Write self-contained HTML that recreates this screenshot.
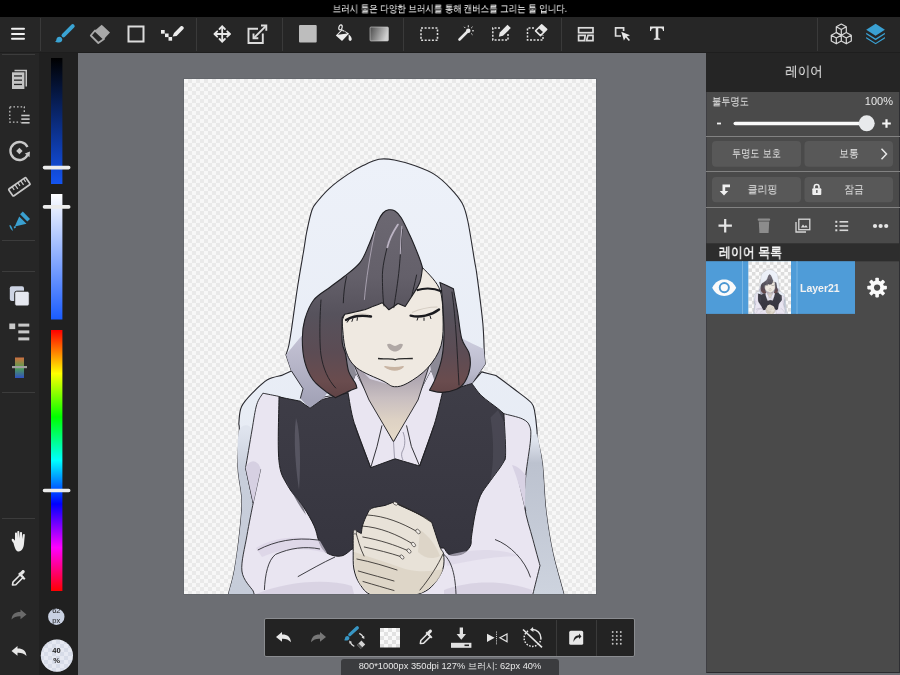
<!DOCTYPE html>
<html><head><meta charset="utf-8">
<style>
*{margin:0;padding:0;box-sizing:border-box}
html,body{width:900px;height:675px;overflow:hidden;background:#6c6e73;font-family:"Liberation Sans",sans-serif}
.abs{position:absolute}
#status{left:0;top:0;width:900px;height:17px;background:#000}
#stxt{left:0;top:0;width:900px;height:17px;color:#fff;font-size:10px;text-align:center;line-height:17px;transform:scaleX(0.85)}
#toolbar{left:0;top:17px;width:900px;height:36px;background:#262626;border-bottom:1px solid #1e1e1e}
#lside{left:0;top:53px;width:39px;height:622px;background:#262626}
#ccol{left:39px;top:53px;width:39px;height:622px;background:#202020}
#canvas{left:184px;top:79px;width:412px;height:515px;box-shadow:0 0 0 1px #64676c;background:repeating-conic-gradient(#e9e9e9 0 25%,#f7f7f7 0 50%) 0 0/8px 8px}
#rpanel{left:706px;top:53px;width:194px;height:620px;background:#4a4a4a;border-left:1px solid #3e3e42;border-right:1px solid #2e2e32;border-bottom:1px solid #2a2a2e}
#rhead{left:706px;top:53px;width:194px;height:39px;background:#252525}
.t{position:absolute;white-space:nowrap;color:#e8e8e8;font-size:11px;line-height:1}
#btoolbar{left:264px;top:618px;width:371px;height:39px;background:#232323;border:1px solid #8a8c90;border-radius:2px}
#bstatus{left:341px;top:659px;width:218px;height:16px;background:#3b3c3f;border-radius:3px 3px 0 0}
svg{overflow:visible;will-change:transform}
.t,#stxt{will-change:transform}
</style></head><body>
<div id="status" class="abs"></div>
<div id="toolbar" class="abs"></div>
<div id="lside" class="abs"></div>
<div id="ccol" class="abs"></div>
<div id="canvas" class="abs"></div>
<div id="rpanel" class="abs"></div>
<div id="rhead" class="abs"></div>
<div id="btoolbar" class="abs"></div>
<div id="bstatus" class="abs"></div>
<svg class="abs" style="left:0;top:0" width="900" height="675" viewBox="0 0 900 675">
<defs>
 <clipPath id="cv"><rect x="184" y="79" width="412" height="515"/></clipPath>
 <linearGradient id="hair" x1="0" y1="210" x2="0" y2="400" gradientUnits="userSpaceOnUse"><stop offset="0" stop-color="#6c6872"/><stop offset="0.35" stop-color="#64606a"/><stop offset="0.55" stop-color="#56525c"/><stop offset="0.75" stop-color="#5c4c54"/><stop offset="0.9" stop-color="#6a4c4e"/><stop offset="1" stop-color="#5e4244"/></linearGradient>
 <linearGradient id="hood" x1="0" y1="160" x2="0" y2="594" gradientUnits="userSpaceOnUse"><stop offset="0" stop-color="#edf1f9"/><stop offset="1" stop-color="#e4e9f2"/></linearGradient>
 <linearGradient id="hoodsideL" x1="0" y1="430" x2="0" y2="594" gradientUnits="userSpaceOnUse"><stop offset="0" stop-color="#dfe4ee"/><stop offset="0.25" stop-color="#c8cedb"/><stop offset="1" stop-color="#c6ccd9"/></linearGradient>
 <linearGradient id="hoodsideR" x1="0" y1="440" x2="0" y2="594" gradientUnits="userSpaceOnUse"><stop offset="0" stop-color="#dfe4ee"/><stop offset="0.15" stop-color="#bcc2cf"/><stop offset="1" stop-color="#cdd3de"/></linearGradient>
 <linearGradient id="hoodside" x1="0" y1="400" x2="0" y2="594" gradientUnits="userSpaceOnUse"><stop offset="0" stop-color="#e2e6ef"/><stop offset="1" stop-color="#c4c9d6"/></linearGradient>
 <linearGradient id="vest" x1="0" y1="390" x2="0" y2="555" gradientUnits="userSpaceOnUse"><stop offset="0" stop-color="#3e3d47"/><stop offset="1" stop-color="#36353f"/></linearGradient>
 <linearGradient id="shadeR" x1="0" y1="335" x2="0" y2="400" gradientUnits="userSpaceOnUse"><stop offset="0" stop-color="#cfcfe0"/><stop offset="0.6" stop-color="#b8b8ca"/><stop offset="1" stop-color="#8c8c9e"/></linearGradient>
 <linearGradient id="shadeL" x1="0" y1="330" x2="0" y2="400" gradientUnits="userSpaceOnUse"><stop offset="0" stop-color="#c8c6d8"/><stop offset="1" stop-color="#a4a4b8"/></linearGradient>
 <linearGradient id="neck" x1="0" y1="375" x2="0" y2="440" gradientUnits="userSpaceOnUse"><stop offset="0" stop-color="#aaa2ae"/><stop offset="0.35" stop-color="#c8bec0"/><stop offset="0.7" stop-color="#ded2c4"/><stop offset="1" stop-color="#e6dac8"/></linearGradient>
</defs>
<g id="fig" clip-path="url(#cv)" stroke-linejoin="round">
<path d="M378.9 159.3 C384.1 158.4 388.5 158.9 394.4 160.0 C400.3 161.1 407.7 163.2 414.4 165.6 C421.1 168.0 428.5 170.7 434.4 174.4 C440.3 178.1 445.4 183.0 450.0 187.8 C454.6 192.6 459.2 197.8 462.2 203.3 C465.2 208.8 465.8 211.6 467.8 221.0 C469.8 230.4 472.9 250.9 474.4 260.0 C475.9 269.1 475.6 265.0 477.0 275.5 C478.4 286.0 481.6 309.8 482.8 323.0 C484.0 336.2 484.0 348.2 484.4 355.0 C484.8 361.8 485.1 362.4 485.2 363.9 C483.0 367.2 474.1 380.2 471.9 383.5 C473.5 381.6 480.1 373.8 481.7 371.9 C484.1 372.5 493.5 374.9 495.9 375.5 C498.9 377.7 507.8 384.2 513.7 388.8 C519.6 393.4 528.0 398.9 531.5 403.0 C535.0 407.1 534.1 409.2 535.0 413.7 C535.9 418.1 536.4 425.3 536.9 429.7 C537.4 434.1 536.8 434.3 537.7 440.0 C538.6 445.7 541.0 451.9 542.4 463.7 C543.8 475.5 544.2 496.0 546.0 511.0 C547.8 526.0 550.0 539.9 553.0 553.7 C556.0 567.5 561.9 586.3 563.7 594.0 C565.5 601.7 564.0 599.0 564.0 600.0 C507.8 600.0 283.2 600.0 227.0 600.0 C227.4 598.5 228.1 595.8 229.3 591.0 C230.5 586.2 232.6 580.2 234.3 571.0 C236.0 561.8 238.0 547.5 239.3 535.8 C240.6 524.0 242.1 511.8 241.9 500.5 C241.7 489.2 238.4 479.6 238.0 467.8 C237.6 456.1 239.2 437.6 239.3 430.0 C239.5 422.4 238.5 426.4 238.9 422.5 C239.3 418.6 239.2 411.5 241.6 406.5 C244.0 401.5 248.8 396.8 253.1 392.3 C257.4 387.9 262.6 382.6 267.4 379.8 C272.1 377.0 279.2 376.1 281.6 375.4 C283.2 374.6 289.8 371.6 291.4 370.9 C290.5 368.2 286.9 357.6 286.0 354.9 C286.4 353.4 287.8 350.1 288.7 346.0 C289.6 341.9 289.9 340.1 291.4 330.0 C292.9 319.9 295.7 298.8 297.8 285.5 C299.9 272.2 302.3 258.9 303.8 250.0 C305.3 241.1 305.3 238.7 306.7 232.0 C308.1 225.3 310.1 215.2 312.0 210.0 C313.9 204.8 314.8 204.7 317.8 201.0 C320.8 197.3 325.0 192.2 330.0 187.8 C335.0 183.4 342.3 178.1 347.8 174.4 C353.3 170.7 357.8 168.1 363.0 165.6 C368.2 163.1 373.7 160.2 378.9 159.3Z" fill="url(#hood)" stroke="#2a2a30" stroke-width="1.1"/>
<path d="M239.3 430.0 C237.0 436.3 237.6 456.1 238.0 467.8 C238.4 479.6 241.7 489.2 241.9 500.5 C242.1 511.8 240.6 524.0 239.3 535.8 C238.0 547.5 236.0 561.8 234.3 571.0 C232.6 580.2 230.5 586.2 229.3 591.0 C228.1 595.8 227.4 598.5 227.0 600.0 C231.8 600.0 251.2 600.0 256.0 600.0 C255.5 598.5 255.5 595.8 253.2 591.0 C250.8 586.2 242.9 580.2 241.9 571.0 C240.9 561.8 245.0 547.1 246.9 535.8 C248.8 524.5 252.1 508.5 253.2 503.0 C251.9 497.1 246.9 473.7 245.6 467.8 C246.7 461.5 253.1 436.3 252.0 430.0 C250.9 423.7 241.6 423.7 239.3 430.0Z" fill="url(#hoodsideL)"/>
<path d="M530.5 436.0 C531.6 435.7 536.1 434.3 537.2 434.0 C538.1 438.9 540.9 450.9 542.4 463.7 C543.9 476.5 544.2 496.0 546.0 511.0 C547.8 526.0 550.0 539.9 553.0 553.7 C556.0 567.5 561.9 586.3 563.7 594.0 C565.5 601.7 564.0 599.0 564.0 600.0 C558.8 600.0 538.2 600.0 533.0 600.0 C533.0 599.0 531.7 599.7 532.9 594.0 C534.1 588.3 538.8 570.3 540.0 565.6 C538.8 561.2 535.5 549.4 532.9 539.5 C530.3 529.6 525.8 517.1 524.6 506.4 C523.4 495.7 524.8 487.2 525.8 475.5 C526.8 463.8 529.7 442.6 530.5 436.0Z" fill="url(#hoodsideR)"/>
<path d="M262.9 393.2 C265.4 393.7 275.5 395.7 278.0 396.2 C283.2 398.0 303.8 405.2 309.0 407.0 C311.5 405.3 321.5 398.7 324.0 397.0 C328.0 396.3 344.0 393.5 348.0 392.8 C349.3 389.5 354.7 376.3 356.0 373.0 C362.2 384.4 387.2 430.2 393.5 441.7 C399.8 429.8 424.8 381.9 431.0 370.0 C432.9 373.8 440.5 389.0 442.4 392.8 C445.7 393.3 458.7 395.5 462.0 396.0 C469.0 398.9 496.9 410.8 503.9 413.7 C507.0 414.6 518.3 416.9 522.6 419.0 C526.9 421.1 528.4 422.7 529.7 426.2 C531.0 429.7 531.1 431.8 530.5 440.0 C529.9 448.2 526.8 464.4 525.8 475.5 C524.8 486.6 523.4 495.7 524.6 506.4 C525.8 517.1 530.3 529.6 532.9 539.5 C535.5 549.4 538.8 561.2 540.0 565.6 C538.8 570.3 534.1 589.3 532.9 594.0 C532.9 595.0 533.0 599.0 533.0 600.0 C486.8 600.0 302.2 600.0 256.0 600.0 C255.5 598.5 253.7 592.5 253.2 591.0 C251.3 587.7 242.9 580.2 241.9 571.0 C240.9 561.8 245.0 547.1 246.9 535.8 C248.8 524.5 252.1 508.5 253.2 503.0 C251.9 497.1 246.9 473.7 245.6 467.8 C246.7 461.5 250.2 440.5 252.0 430.0 C253.8 419.5 254.9 410.8 256.7 404.7 C258.5 398.6 261.9 395.1 262.9 393.2Z" fill="#e9e5f1" stroke="#1e1e22" stroke-width="0.9"/>
<path d="M253.2 503 L260.7 469 M245.6 467.8 L253.2 503" fill="none" stroke="#2a2a30" stroke-width="0.8"/>
<path d="M245.6 467.8 L253.2 503 L260.7 469 C258 460 250 458 245.6 467.8Z" fill="#d6d0e2"/>
<path d="M516.3 470.8 C520 485 523 500 525.8 511" fill="none" stroke="#2a2a30" stroke-width="0.8"/>
<path d="M512 465 C518 480 522 495 525 509 C525 495 525.5 485 525.8 475.5 C522 470 517 466 512 465Z" fill="#d8d2e4"/>
<path d="M302.0 335.3 C299.3 338.6 288.7 351.6 286.0 354.9 C286.9 357.6 290.5 368.2 291.4 370.9 C293.3 373.9 301.1 385.7 303.0 388.7 C302.6 390.3 300.8 396.9 300.3 398.5 C301.9 400.1 308.4 406.7 310.0 408.3 C312.1 406.8 320.4 400.9 322.5 399.4 C323.4 398.3 326.8 393.9 327.6 392.8 C325.2 390.6 315.3 382.0 312.9 379.8 C311.5 376.8 306.1 364.9 304.8 361.9 C304.4 358.1 302.7 342.8 302.3 339.0 C302.2 338.4 302.1 335.9 302.0 335.3Z" fill="url(#shadeL)"/>
<path d="M291.4 370.9 L303 388.7 L300.3 398.5" fill="none" stroke="#1e1e22" stroke-width="0.9"/>
<path d="M461.7 338.5 C465.3 340.2 479.9 347.1 483.5 348.8 C483.6 349.8 484.2 354.0 484.4 355.0 C484.5 356.5 485.1 362.4 485.2 363.9 C483.0 367.2 474.1 380.2 471.9 383.5 C469.3 384.5 459.1 388.3 456.5 389.3 C457.9 388.1 462.6 385.6 464.8 382.0 C467.1 378.4 469.3 372.3 470.0 367.5 C470.7 362.7 470.4 357.8 469.0 353.0 C467.6 348.2 462.9 340.9 461.7 338.5Z" fill="url(#shadeR)"/>
<path d="M338 335 L448 335 L446 398 L431 370 L393.5 441.7 L356 373 L340 398Z" fill="#dcd8e6"/>
<path d="M342 335 L352.8 362 L356 373 L350 392 L342 390Z" fill="#8c8a96"/>
<path d="M444 335 L429.8 363.7 L431 370 L438 392 L446 390Z" fill="#8c8a96"/>
<path d="M352.8 362 L369 400 L393.5 441.7 L418 400 L429.8 363.7 L420 372 L394 386 L370 379Z" fill="url(#neck)"/>
<path d="M352.8 362 L369 400 L393.5 441.7 L418 400 L429.8 363.7" fill="none" stroke="#1e1e22" stroke-width="0.9"/>
<path d="M279.0 397.0 C282.6 397.7 296.8 400.5 300.3 401.2 C301.9 402.4 308.4 407.1 310.0 408.3 C312.1 406.8 320.4 400.9 322.5 399.4 C326.8 398.3 343.8 393.9 348.0 392.8 C349.1 397.9 350.6 411.2 354.4 423.7 C358.2 436.2 368.0 460.4 370.7 467.7 C374.8 466.2 390.9 460.3 395.0 458.8 C399.1 460.0 415.5 464.8 419.6 466.0 C422.0 459.2 430.2 437.6 434.0 425.4 C437.8 413.2 441.0 398.2 442.4 392.8 C444.7 392.1 453.7 389.2 456.0 388.5 C458.6 387.7 469.2 384.3 471.9 383.5 C473.5 385.6 477.4 391.8 481.7 395.9 C486.0 400.0 494.0 405.4 497.7 408.4 C501.4 411.4 502.9 412.8 503.9 413.7 C504.2 420.2 505.8 444.7 505.6 452.9 C505.5 461.1 505.5 458.4 503.0 463.0 C500.5 467.6 494.3 475.2 490.5 480.6 C486.7 486.1 482.9 490.2 480.4 495.7 C477.9 501.2 476.8 506.7 475.3 513.4 C473.8 520.1 472.4 530.6 471.6 536.0 C470.8 541.4 471.8 543.0 470.3 546.0 C468.8 549.0 466.1 552.2 462.7 553.7 C459.3 555.2 453.1 556.0 450.0 555.0 C446.9 554.0 445.0 549.2 444.0 548.0 C428.7 548.2 367.3 548.8 352.0 549.0 C350.5 550.1 346.2 554.4 343.0 555.5 C339.8 556.6 336.2 556.3 333.0 555.5 C329.8 554.7 326.4 553.1 324.0 550.5 C321.6 547.9 320.1 544.1 318.5 540.0 C316.9 535.9 316.8 531.7 314.2 526.0 C311.6 520.3 307.2 512.6 302.8 505.9 C298.4 499.2 291.7 493.3 287.7 485.7 C283.7 478.1 280.3 475.3 278.9 460.5 C277.4 445.7 279.0 407.6 279.0 397.0Z" fill="url(#vest)" stroke="#1e1e22" stroke-width="1"/>
<path d="M490.5 417.6 C494 440 494 462 490.5 480.6 L503 463 L505.6 452.9 L504.3 422.7 L498 410 Z" fill="#4a4954" opacity="0.9"/>
<path d="M296 418 C300 430 301 460 299 490 C296 470 293 440 296 418Z" fill="#5c5a66" opacity="0.85"/>
<path d="M279 460 C285 480 295 500 306 515 L302.8 505.9 L287.7 485.7 L278.9 460.5Z" fill="#4a4954" opacity="0.7"/>
<path d="M393.5 441.7 L394.5 458 M403 432 C406 440 405 447 402 452 C401 455 402 458 403 460" fill="none" stroke="#8a889a" stroke-width="0.8"/>
<path d="M354.4 423.7 L370.7 467.7 L377 446.5 L382 425.4" fill="none" stroke="#1e1e22" stroke-width="0.9"/>
<path d="M434 425.4 L419.6 466 L411.4 446.5 L406.5 425.4" fill="none" stroke="#1e1e22" stroke-width="0.9"/>
<path d="M342.0 321.0 C343.3 317.5 348.7 303.5 350.0 300.0 C355.0 298.3 375.0 291.7 380.0 290.0 C385.0 288.0 405.0 280.0 410.0 278.0 C411.8 276.0 419.2 268.0 421.0 266.0 C424.0 269.6 435.3 279.4 439.0 287.8 C442.7 296.2 442.7 307.1 443.0 316.7 C443.3 326.3 443.5 337.1 441.0 345.6 C438.5 354.1 433.3 361.6 427.8 367.8 C422.3 374.0 413.4 379.9 407.8 383.0 C402.2 386.1 398.5 387.0 394.4 386.7 C390.3 386.4 389.3 384.1 383.0 381.0 C376.7 377.9 362.9 373.0 356.7 367.8 C350.5 362.6 348.1 357.8 345.6 350.0 C343.2 342.2 342.6 325.8 342.0 321.0Z" fill="#efe9e1" stroke="#1e1e22" stroke-width="1"/>
<path d="M388.7 209.8 C390.7 209.5 392.9 209.7 395.0 211.0 C397.1 212.3 398.7 213.7 401.2 217.8 C403.7 221.9 407.0 229.1 410.0 235.6 C413.0 242.1 416.9 251.7 419.0 257.0 C421.1 262.3 421.9 265.8 422.5 267.6 C422.1 270.0 421.5 277.6 420.0 282.0 C418.5 286.4 414.4 292.0 413.3 294.0 C411.9 296.1 406.6 304.4 405.2 306.5 C404.0 306.0 399.2 304.0 398.0 303.5 C396.5 304.6 390.4 308.8 388.9 309.8 C387.8 308.6 383.5 304.0 382.4 302.8 C381.0 303.3 375.4 305.5 374.0 306.0 C372.4 306.6 366.0 309.2 364.4 309.8 C362.8 310.2 356.6 311.6 355.0 312.0 C353.3 312.4 346.6 313.8 344.9 314.2 C344.4 314.8 342.6 317.3 342.2 317.9 C342.2 322.0 341.6 336.3 342.2 342.3 C342.8 348.3 344.4 348.8 345.5 353.7 C346.6 358.6 347.1 366.8 348.7 371.7 C350.3 376.6 353.9 380.3 355.3 383.0 C356.7 385.7 356.6 387.2 356.9 388.0 C355.5 388.5 352.2 389.6 348.7 391.2 C345.2 392.8 337.9 396.6 335.7 397.7 C334.4 396.9 331.4 395.8 327.6 392.8 C323.8 389.8 316.7 385.0 312.9 379.8 C309.1 374.6 306.6 368.7 304.8 361.9 C303.0 355.1 302.3 346.1 302.3 339.0 C302.3 331.9 302.9 326.0 304.8 319.5 C306.7 313.0 309.5 305.4 313.7 300.0 C317.9 294.6 324.9 291.1 330.0 287.2 C335.1 283.3 339.2 280.6 344.2 276.5 C349.2 272.4 356.1 267.6 360.2 262.3 C364.3 257.0 366.0 251.3 369.0 244.5 C372.0 237.7 375.7 226.7 378.0 221.4 C380.3 216.2 381.2 214.9 383.0 213.0 C384.8 211.1 386.7 210.1 388.7 209.8Z" fill="url(#hair)" stroke="#1e1e22" stroke-width="1.1"/>
<path d="M439.9 282.4 C442.1 283.4 451.1 287.6 453.4 288.7 C454.1 292.5 456.1 303.2 457.5 311.5 C458.9 319.8 459.8 331.6 461.7 338.5 C463.6 345.4 467.6 348.2 469.0 353.0 C470.4 357.8 470.7 362.7 470.0 367.5 C469.3 372.3 467.1 378.4 464.8 382.0 C462.6 385.6 460.3 387.6 456.5 389.3 C452.7 391.0 446.5 392.2 442.0 392.4 C437.5 392.6 431.6 390.6 429.5 390.3 C430.5 388.2 433.6 383.4 435.7 377.9 C437.8 372.4 440.6 364.7 442.0 357.1 C443.4 349.5 444.0 342.6 444.0 332.2 C444.0 321.8 442.7 303.2 442.0 294.9 C441.3 286.6 440.2 284.5 439.9 282.4Z" fill="url(#hair)" stroke="#1e1e22" stroke-width="1.1"/>
<g fill="none" stroke="#1e1e22" stroke-width="0.9" stroke-linecap="round"><path d="M388.9 240.9 C385 255 382 268 382.4 278.3 C382.5 290 383 300 384 306"/><path d="M402 229.4 C401 245 400 262 398.7 273.4 C397 288 395 300 393.8 307.7"/><path d="M346.5 276.7 C344.5 285 343.5 295 343.3 302.8"/><path d="M416.6 275 C415 283 413 290 411.7 296.3"/><path d="M321 300 C319.5 320 319.5 345 321 355 C323 368 328 380 335.7 388"/><path d="M452 292 C456 320 457 350 459 385"/></g>
<g fill="none" stroke="#bcb4c4" stroke-linecap="round"><path d="M397.9 224.6 C393 232 389 240 387.3 247.4" stroke-width="1.8"/><path d="M401.9 226.2 C401 235 400.5 245 400.3 253.9" stroke-width="1"/><path d="M375 231 C370 255 366 280 364.4 299.5" stroke-width="0.9" opacity="0.85"/></g>
<path d="M346 320 C352 316.5 362 315 371 316.5" fill="none" stroke="#1a1a1e" stroke-width="2.4" stroke-linecap="round"/>
<path d="M349 319.5 L347 322.5 M353 318.3 L351.8 321.8 M357.5 317.4 L357 320.8" stroke="#1a1a1e" stroke-width="1"/>
<path d="M354 314.6 C359 313.5 365 313.5 369 314.8" fill="none" stroke="#d4ccc2" stroke-width="1"/>
<path d="M410.6 315.6 C420 318 431 315.5 439 309.5" fill="none" stroke="#1a1a1e" stroke-width="2.4" stroke-linecap="round"/>
<path d="M418 317.5 L417 320.5 M424 317.5 L424 320.8 M430 315.8 L431 319" stroke="#1a1a1e" stroke-width="1"/>
<path d="M416.7 290.3 C425 287.5 434 288 442 291.5" fill="none" stroke="#1a1a1e" stroke-width="2"/>
<path d="M412 312.5 C420 309 431 307 437.5 307" fill="none" stroke="#d4ccc2" stroke-width="1.1"/>
<path d="M387 344.5 C390 342.5 392 345.5 395 346 C398 345.5 400 342.5 403 344.5 C402 349 398 351.5 395 351.5 C392 351.5 388 349 387 344.5Z" fill="#a49c9a" opacity="0.85"/>
<path d="M378 358.5 C386 359.5 392 358 395 359.8 C399 358 405 359 412.8 358.5" fill="none" stroke="#2a2a2a" stroke-width="1.3"/>
<path d="M385 366.7 C391 371 399 371 403 366.7 C398 368 391 368 385 366.7Z" fill="#c8b4a2" stroke="#c8b4a2" stroke-width="1.6"/>
<path d="M256 548 C272 538 298 534 320 541 L327 553 C305 547 282 548 262 557Z" fill="#d8d2e4" opacity="0.7"/>
<path d="M256 594 C285 582 325 578 352 586 L354 594Z" fill="#d4cee0" opacity="0.8"/>
<path d="M444 590 C470 580 505 580 532 590 L532 594 L444 594Z" fill="#d4cee0" opacity="0.8"/>
<path d="M445 556 C470 548 500 548 520 556 C500 556 470 560 447 566Z" fill="#d8d2e4" opacity="0.6"/>
<g fill="none" stroke="#2a2a30" stroke-width="0.9"><path d="M257.8 550 C275 541 295 537 318 540"/><path d="M264.4 590 C265 575 268 560 275.6 554.4 C290 548 305 546 320 549"/><path d="M297.8 576.7 C310 570 322 563 335 557"/><path d="M443.6 554 C450 560 455 570 456 594"/><path d="M495 539.5 C510 545 525 560 530.5 577.4"/></g>
<path d="M394.0 502.4 C396.5 502.4 395.2 503.2 399.9 505.4 C404.6 507.6 416.9 513.1 422.1 515.8 C427.3 518.5 429.3 520.2 431.0 521.7 C432.7 523.2 431.0 520.5 432.5 524.7 C434.0 528.9 438.1 542.1 440.0 547.0 C441.9 551.9 443.1 550.6 443.6 554.3 C444.1 558.0 444.5 564.0 442.9 569.0 C441.3 574.0 437.5 580.0 434.0 584.0 C430.5 588.0 427.7 590.6 422.0 592.8 C416.3 595.0 408.4 596.6 400.0 597.0 C391.6 597.4 378.4 597.2 371.7 595.0 C365.0 592.8 362.8 588.3 359.8 584.0 C356.8 579.7 355.0 574.5 353.9 569.0 C352.8 563.5 353.3 557.5 353.2 551.3 C353.1 545.1 353.2 535.2 353.2 532.0 C353.6 531.8 355.0 530.8 355.4 530.6 C356.4 531.1 360.3 533.0 361.3 533.5 C361.6 532.0 361.8 527.9 362.8 524.7 C363.8 521.5 365.7 517.0 367.2 514.3 C368.7 511.6 368.7 509.8 371.7 508.3 C374.7 506.8 381.3 506.4 385.0 505.4 C388.7 504.4 391.5 502.4 394.0 502.4Z" fill="#e8e2d8" stroke="#1e1e22" stroke-width="1"/>
<path d="M354 552 C370 557 388 563 405 569 C420 573 435 571 442.9 569 C441 576 438 580 434 584 L422 592.8 L400 597 L371.7 595 L359.8 584 C356 576 354 565 354 552Z" fill="#dcd4c6" opacity="0.85"/>
<path d="M420 530 C428 535 436 545 440 556 C432 560 424 558 418 552Z" fill="#d8d0c2" opacity="0.7"/>
<g fill="none" stroke="#2e2a28" stroke-width="0.85" stroke-linecap="round"><path d="M367.5 515 C385 516 402 523 416 531"/><path d="M361.5 526 C380 527 398 535 412 543.5"/><path d="M362.8 537 C380 540 395 545 407.5 550.5"/><path d="M364.3 547 C378 550 390 553 400.5 556.5"/><path d="M356.9 559 C372 562 385 566 397 570"/><path d="M358.3 571 C372 575 384 578 394 581"/><path d="M363 581.5 C375 585 385 588 394 590.5"/><path d="M396 503 C408 508 421 515 431 522"/><path d="M355.4 530.6 C358 540 360 548 364 556"/><path d="M443 554 C438 565 430 578 420 590"/></g>
<g fill="#f1ede8" stroke="#2e2a28" stroke-width="0.6"><ellipse cx="418" cy="531.5" rx="2.7" ry="1.7" transform="rotate(45 418 531.5)"/><ellipse cx="413.5" cy="544.5" rx="2.6" ry="1.6" transform="rotate(50 413.5 544.5)"/><ellipse cx="409" cy="551" rx="2.5" ry="1.6" transform="rotate(50 409 551)"/><ellipse cx="402" cy="557" rx="2.4" ry="1.5" transform="rotate(50 402 557)"/><ellipse cx="395.5" cy="503.5" rx="2.3" ry="1.4" transform="rotate(25 395.5 503.5)"/><ellipse cx="355" cy="532" rx="1.4" ry="2.2"/></g>
</g>
</svg>
<svg class="abs" style="left:0;top:0" width="900" height="675" viewBox="0 0 900 675">
<defs>
 <linearGradient id="g1" x1="0" y1="0" x2="0" y2="1"><stop offset="0" stop-color="#000"/><stop offset="1" stop-color="#1454f0"/></linearGradient>
 <linearGradient id="g2" x1="0" y1="0" x2="0" y2="1"><stop offset="0" stop-color="#fff"/><stop offset="1" stop-color="#1a5cff"/></linearGradient>
 <linearGradient id="g3" x1="0" y1="0" x2="0" y2="1">
  <stop offset="0" stop-color="#f00"/><stop offset="0.1667" stop-color="#ff0"/><stop offset="0.3333" stop-color="#0f0"/><stop offset="0.5" stop-color="#0ff"/><stop offset="0.6667" stop-color="#00f"/><stop offset="0.8333" stop-color="#f0f"/><stop offset="1" stop-color="#f00"/>
 </linearGradient>
 <linearGradient id="g4" x1="0" y1="0" x2="1" y2="0.3"><stop offset="0" stop-color="#4a4a4a"/><stop offset="1" stop-color="#cfcfcf"/></linearGradient>
 <linearGradient id="g5" x1="0" y1="0" x2="0" y2="1"><stop offset="0" stop-color="#d07040"/><stop offset="0.5" stop-color="#50a050"/><stop offset="1" stop-color="#3050c0"/></linearGradient>
 <pattern id="chk" width="8" height="8" patternUnits="userSpaceOnUse"><rect width="8" height="8" fill="#fafafa"/><rect width="4" height="4" fill="#e2e2e2"/><rect x="4" y="4" width="4" height="4" fill="#e2e2e2"/></pattern>
 <pattern id="chk4" width="8" height="8" patternUnits="userSpaceOnUse"><rect width="8" height="8" fill="#f2f4f8"/><rect width="4" height="4" fill="#c8cedc"/><rect x="4" y="4" width="4" height="4" fill="#c8cedc"/></pattern>
 <pattern id="chk2" width="6" height="6" patternUnits="userSpaceOnUse"><rect width="6" height="6" fill="#f2f2f2"/><rect width="3" height="3" fill="#d4d8e0"/><rect x="3" y="3" width="3" height="3" fill="#d4d8e0"/></pattern>
</defs>
<!-- toolbar separators -->
<g fill="#3a3a3a">
 <rect x="40" y="18" width="1" height="33"/><rect x="196" y="18" width="1" height="33"/><rect x="282" y="18" width="1" height="33"/>
 <rect x="403" y="18" width="1" height="33"/><rect x="561" y="18" width="1" height="33"/><rect x="817" y="18" width="1" height="33"/>
</g>
<!-- hamburger -->
<g stroke="#f0f0f0" stroke-width="2" stroke-linecap="round"><path d="M12 28.7H24M12 34H24M12 38.7H24"/></g>
<!-- brush -->
<g fill="#3aa4d4">
 <path d="M72.7 26.2 L63.5 35.4" stroke="#3aa4d4" stroke-width="4" stroke-linecap="round"/>
 <path d="M59.3 36.7 C61.5 36.7 62.3 38.5 62.3 39.6 C62.3 41.5 60.8 42.6 59 42.6 C57.5 42.6 56 42.3 55 41.8 C56.3 41.3 56.3 40.3 56.4 39.5 C56.5 37.8 57.8 36.7 59.3 36.7Z"/>
</g>
<!-- eraser -->
<g>
 <path d="M101.7 24.7 L110 32.5 L104 39 L95 30.5Z" fill="#a8a8a8"/>
 <path d="M95 30.5 L104 39 L98.3 43 L90.8 35.5Z" fill="none" stroke="#a8a8a8" stroke-width="1.8" stroke-linejoin="round"/>
</g>
<!-- square -->
<rect x="128.5" y="26.5" width="15" height="15" fill="none" stroke="#dcdcdc" stroke-width="2"/>
<!-- dotted line pen -->
<g fill="#ececec">
 <rect x="161" y="30" width="3.7" height="3.7"/><rect x="165" y="33.5" width="3.6" height="3.6"/><rect x="168.5" y="37" width="3.6" height="3.7"/>
 <path d="M172.6 36.6 L174 33 L180.5 26.5 C181.3 25.7 182.5 25.9 183.2 26.7 C183.9 27.4 184 28.5 183.2 29.3 L176.6 35.9 Z"/>
</g>
<!-- move -->
<g stroke="#e8e8e8" stroke-width="1.8" fill="none" stroke-linecap="round">
 <path d="M222.2 26.5V41.5M214.7 34H229.7"/>
 <path d="M219.5 29 L222.2 26.3 L224.9 29M219.5 39 L222.2 41.7 L224.9 39M217.2 31.3 L214.5 34 L217.2 36.7M227.2 31.3 L229.9 34 L227.2 36.7" stroke-linejoin="round"/>
</g>
<!-- transform -->
<g stroke="#dcdcdc" stroke-width="1.9" fill="none">
 <path d="M258 28.7 H248.5 V43 H262.8 V33.5"/>
 <path d="M253.5 38.3 L266 25.8"/>
 <path d="M261 25.5 H266.3 V30.8"/>
 <path d="M253.5 33.5 V38.3 H258.3"/>
</g>
<!-- filled square -->
<rect x="299" y="25" width="17.7" height="17.5" rx="1" fill="#bdbdbd"/>
<!-- bucket -->
<g fill="#ececec">
 <path d="M335.8 35.4 L342 29.2 L349 33.6 L342 41 Z"/>
 <path d="M337.9 34.7 L342.2 30.6 L343.2 31.8 L344 30.9 L347.2 33.6 Z" fill="#262626"/>
 <ellipse cx="340.5" cy="27.4" rx="1.6" ry="2.6" transform="rotate(15 340.5 27.4)" fill="none" stroke="#ececec" stroke-width="1.2"/>
 <path d="M348.6 34.2 C350.5 35.5 352 38 351.7 39.6 C351.5 40.8 350.3 41.1 349.6 40.8 C348.6 40.3 348.4 39 348.7 37.8 Z"/>
</g>
<!-- gradient rect -->
<rect x="370" y="27" width="18.4" height="14" rx="1" fill="url(#g4)" stroke="#d0d0d0" stroke-width="0.6"/>
<!-- dotted selection -->
<rect x="421" y="28" width="16.5" height="12.3" fill="none" stroke="#dedede" stroke-width="1.6" stroke-dasharray="2 1.6"/>
<!-- magic wand -->
<g stroke="#e8e8e8" fill="#e8e8e8">
 <path d="M459.5 39.5 L467 32" stroke-width="2.6" stroke-linecap="round"/>
 <circle cx="468.3" cy="30.8" r="2.2" stroke="none"/>
 <path d="M468.3 25.3V27.3M472.5 26.8L471.2 28.1M474 30.8H472M472.5 34.8L471.2 33.5M464.1 26.8L465.4 28.1" stroke-width="1" fill="none"/>
</g>
<!-- dotted rect pen -->
<g>
 <path d="M500 28 H492.8 V40 H508 V33" fill="none" stroke="#dedede" stroke-width="1.5" stroke-dasharray="2 1.5"/>
 <path d="M498.8 36.7 L499.8 32.5 L507.5 24.8 L510.8 28.1 L503 35.8 Z" fill="#e8e8e8"/>
</g>
<!-- dotted rect eraser -->
<g>
 <path d="M534 28 H527.5 V40 H543 V35" fill="none" stroke="#dedede" stroke-width="1.5" stroke-dasharray="2 1.5"/>
 <path d="M541.7 24.7 L546.7 29.4 L540.5 35.6 L535.5 30.9 Z" fill="none" stroke="#e8e8e8" stroke-width="1.5" stroke-linejoin="round"/>
 <path d="M541.7 24.7 L546.7 29.4 L543.5 32.6 L538.5 27.9 Z" fill="#e8e8e8"/>
</g>
<!-- layout -->
<g fill="none" stroke="#dcdcdc" stroke-width="1.7">
 <rect x="578.6" y="27.8" width="14.4" height="4.9"/>
 <path d="M578.6 35.3 H585.2 L584.4 40.7 H578.6 Z"/>
 <path d="M588 35.3 H593 V40.7 H586.5 Z"/>
</g>
<!-- select cursor -->
<g>
 <path d="M621 36 H615.6 V27.8 H623.6 V31" fill="none" stroke="#dcdcdc" stroke-width="1.7"/>
 <path d="M621.3 31.8 L630 35.3 L626.8 36.5 L630 40 L628.8 41 L625.7 37.6 L623.9 40.5 Z" fill="#e8e8e8"/>
</g>
<!-- T -->
<path d="M650 26.5 H664 V31 H663 C662.8 28.8 662 28.2 660.5 28.2 H658.3 V37.3 C658.3 38.3 658.8 38.6 660.2 38.7 V39.7 H653.8 V38.7 C655.2 38.6 655.7 38.3 655.7 37.3 V28.2 H653.5 C652 28.2 651.2 28.8 651 31 H650Z" fill="#e6e6e6"/>
<!-- cubes -->
<g fill="none" stroke="#d8d8d8" stroke-width="1.2" stroke-linejoin="round">
 <path d="M841.3 24 L846.3 26.8 L846.3 32.5 L841.3 35.3 L836.3 32.5 L836.3 26.8 Z M836.3 26.8 L841.3 29.6 L846.3 26.8 M841.3 29.6 V35.3"/>
 <path d="M836.3 32.5 L841.3 35.3 L841.3 41 L836.3 43.8 L831.3 41 L831.3 35.3 Z M831.3 35.3 L836.3 38.1 L841.3 35.3 M836.3 38.1 V43.8"/>
 <path d="M846.3 32.5 L851.3 35.3 L851.3 41 L846.3 43.8 L841.3 41 M841.3 35.3 L846.3 38.1 L851.3 35.3 M846.3 38.1 V43.8"/>
</g>
<!-- layers stack -->
<g fill="#3aa0d2">
 <path d="M866.2 37.1 L875.6 43 L884.9 37.1 L884.9 38.6 L875.6 44.3 L866.2 38.6Z"/>
 <path d="M866.2 32.7 L875.6 38.6 L884.9 32.7 L884.9 34.3 L875.6 40.2 L866.2 34.3Z"/>
 <path d="M875.6 23.8 L884.9 29.7 L875.6 35.8 L866.2 29.7Z"/>
</g>

<!-- left sidebar separators -->
<g fill="#3c3c3c"><rect x="2" y="54" width="33" height="1"/><rect x="2" y="240" width="33" height="1"/><rect x="2" y="271" width="33" height="1"/><rect x="2" y="392" width="33" height="1"/><rect x="2" y="518" width="33" height="1"/></g>
<!-- pages -->
<g fill="#c4c4c4">
 <path d="M14.5 69.8 H27 V86.5 H25.5 V71.3 H14.5Z"/>
 <rect x="12" y="72.3" width="12.4" height="16.7"/>
 <g fill="#262626"><rect x="14" y="75.3" width="8" height="1.3"/><rect x="14" y="79.5" width="8" height="1.3"/><rect x="14" y="83.8" width="8" height="1.3"/></g>
</g>
<!-- selection with lines -->
<g>
 <rect x="9.8" y="106.8" width="14.5" height="15.3" fill="none" stroke="#c0c0c0" stroke-width="1.3" stroke-dasharray="1.6 2"/>
 <rect x="20.5" y="113.5" width="10" height="11" fill="#262626"/>
 <g fill="#c8c8c8"><rect x="21.3" y="114.7" width="8.3" height="1.6"/><rect x="21.3" y="118.3" width="8.3" height="1.6"/><rect x="21.3" y="122" width="8.3" height="1.6"/></g>
</g>
<!-- rotate -->
<g>
 <path d="M27.5 155 A9 9 0 1 1 27.5 147" fill="none" stroke="#c8c8c8" stroke-width="2.3"/>
 <path d="M24.8 153.5 L29.5 157.3 L30 151.5Z" fill="#c8c8c8"/>
 <path d="M19.4 147.8 L22.6 151 L19.4 154.2 L16.2 151Z" fill="#c8c8c8"/>
</g>
<!-- ruler -->
<g transform="translate(19.4 186.8) rotate(-35)">
 <rect x="-10.5" y="-4.2" width="21" height="8.4" rx="1" fill="none" stroke="#c8c8c8" stroke-width="1.7"/>
 <path d="M-6 -4V-0.5M-2.5 -4V0.8M1 -4V-0.5M4.5 -4V0.8M8 -4V-0.5" stroke="#c8c8c8" stroke-width="1.2"/>
</g>
<!-- pen blue -->
<g fill="#3aa0d0">
 <path d="M20.1 214.3 L22.8 211.6 L30 218.9 L27.3 221.6Z"/>
 <path d="M19.2 216.4 L26.5 223.8 L14.8 226.6Z"/>
 <path d="M13.6 226.8 L15.4 225.9 L16 227.6 L14.3 228.6Z"/>
 <path d="M9.3 225.2 C10 228 11.2 230 12.8 231 C12.9 229.5 12 227.4 10.6 225.2Z"/>
</g>
<!-- overlapping squares -->
<rect x="9.8" y="286.3" width="14.2" height="14.7" rx="2" fill="#cdd3e3"/>
<rect x="14.7" y="291.2" width="14.6" height="14.8" rx="2" fill="#e6e8f0" stroke="#262626" stroke-width="1"/>
<!-- list icon -->
<g fill="#c8c8c8"><rect x="9.3" y="323.5" width="5.9" height="5.6"/><rect x="18.3" y="323.6" width="11" height="3"/><rect x="18.3" y="330.4" width="11" height="3"/><rect x="18.3" y="337.4" width="11" height="3"/></g>
<!-- color picker small -->
<rect x="15" y="357.5" width="9" height="20.5" fill="url(#g5)"/>
<rect x="12" y="366" width="15" height="2.2" fill="#a0a0a0"/>
<!-- hand -->
<path d="M13.5 543 C12 541 11 539.8 12 539 C13 538.3 14 539.5 15 540.7 L15 533.5 C15 532.3 17 532.3 17 533.5 L17 538.5 L17.3 532 C17.3 530.8 19.3 530.8 19.3 532 L19.5 538.5 L20 532.8 C20 531.6 22 531.6 22 532.8 L22 539 L22.8 534.8 C23 533.6 25 533.8 24.8 535 L24 543.5 C23.8 547.5 22 551.5 18.5 551.5 C16.5 551.5 15 549.5 13.5 543Z" fill="#ececec"/>
<!-- eyedropper -->
<g>
 <path d="M12.5 585 L13 582 L20.5 574.5 L23.3 577.3 L15.8 584.8 Z" fill="none" stroke="#e6e6e6" stroke-width="1.6" stroke-linejoin="round"/>
 <path d="M19.5 573 L22 570.5 C23.5 569 25.8 571.3 24.3 572.8 L21.8 575.3" fill="#e6e6e6"/>
 <path d="M18.8 573.3 L24.8 579.3" stroke="#e6e6e6" stroke-width="2"/>
</g>
<!-- redo dim -->
<path d="M11.5 619.5 C12 614 15.5 611.8 20.5 612 L20.5 609.5 L26.5 614.5 L20.5 619.2 L20.5 616.2 C17 616 14 616.8 11.5 619.5Z" fill="#6a6a6a"/>
<!-- undo -->
<path d="M26.5 656 C26 650.5 22.5 648.3 17.5 648.5 L17.5 646 L11.5 651 L17.5 655.7 L17.5 652.7 C21 652.5 24 653.3 26.5 656Z" fill="#e6e6e6"/>

<!-- color sliders -->
<rect x="51" y="58" width="11.4" height="126" fill="url(#g1)"/>
<rect x="51" y="194" width="11.4" height="125.5" fill="url(#g2)"/>
<rect x="51" y="330" width="11.4" height="261" fill="url(#g3)"/>
<g stroke="#ececec" stroke-width="3.6" stroke-linecap="round"><path d="M44.5 167.6H68.7M44.5 206.9H68.7M44.5 490.5H68.7"/></g>
<!-- brush size circles -->
<circle cx="56.3" cy="616.7" r="8.2" fill="#c9d1e2"/>
<text x="56.3" y="613.3" font-size="7.5" fill="#1a1a1a" text-anchor="middle" font-family="Liberation Sans">62</text>
<text x="56.3" y="622.8" font-size="7.5" fill="#1a1a1a" text-anchor="middle" font-family="Liberation Sans">px</text>
<circle cx="56.9" cy="655.6" r="16.1" fill="#dfe3ee"/>
<circle cx="56.9" cy="655.6" r="16.1" fill="url(#chk4)" opacity="0.35"/>
<text x="56.6" y="653" font-size="7.6" font-weight="bold" fill="#1a1a1a" text-anchor="middle" font-family="Liberation Sans">40</text>
<text x="56.6" y="662.8" font-size="7.6" font-weight="bold" fill="#1a1a1a" text-anchor="middle" font-family="Liberation Sans">%</text>
</svg>

<svg class="abs" style="left:0;top:0" width="900" height="675" viewBox="0 0 900 675">
<defs><pattern id="chk3" x="748.3" y="261.2" width="7.2" height="7.2" patternUnits="userSpaceOnUse"><rect width="7.2" height="7.2" fill="#fbfbfb"/><rect width="3.6" height="3.6" fill="#dcdcdc"/><rect x="3.6" y="3.6" width="3.6" height="3.6" fill="#dcdcdc"/></pattern></defs>
<!-- right panel -->
<g fill="#828282"><rect x="706" y="136" width="194" height="1"/><rect x="706" y="171" width="194" height="1"/><rect x="706" y="207" width="194" height="1"/></g>
<rect x="717" y="122.6" width="4" height="1.8" fill="#f0f0f0"/>
<rect x="733.5" y="121.7" width="134" height="3.6" rx="1.8" fill="#fafafa"/>
<circle cx="866.7" cy="123.3" r="8" fill="#e8eaec"/>
<path d="M882.2 123.5H890.8M886.5 119.2V127.8" stroke="#f5f5f5" stroke-width="2.2"/>
<rect x="712" y="141" width="89" height="25.7" rx="4" fill="#585858"/>
<rect x="804.5" y="141" width="88.5" height="25.7" rx="4" fill="#585858"/>
<path d="M881.5 148.7 L886.5 154 L881.5 159.3" fill="none" stroke="#e8e8e8" stroke-width="1.5"/>
<rect x="712" y="177" width="89" height="25.3" rx="4" fill="#585858"/>
<rect x="804.5" y="177" width="88.5" height="25.3" rx="4" fill="#585858"/>
<!-- clipping icon -->
<path d="M721 184.5 H729 V187.3 H724.2 V191 H727.3 L723 195.5 L718.7 191 H721.5 V184.5Z" fill="#f0f0f0" transform="translate(1 0)"/>
<!-- lock -->
<g><path d="M814.3 188.5 V186.8 C814.3 183.8 819 183.8 819 186.8 V188.5" fill="none" stroke="#f0f0f0" stroke-width="1.6"/><rect x="812.3" y="188.2" width="9" height="6.8" rx="1" fill="#f0f0f0"/><rect x="816.2" y="190" width="1.3" height="3" fill="#585858"/></g>
<!-- + -->
<path d="M718.5 225.7H731.9M725.2 219V232.5" stroke="#e6e6e6" stroke-width="2.2"/>
<!-- trash -->
<g fill="#8c8c8c"><rect x="757.7" y="218.5" width="12.5" height="2.2" rx="1"/><path d="M758.8 221.5 H769.2 L768.6 233 H759.4Z"/></g>
<!-- copy -->
<g fill="none" stroke="#d8d8d8" stroke-width="1.3"><path d="M796 222 V232 H806"/><rect x="798.8" y="219.2" width="11" height="10.5"/></g>
<path d="M800.8 227.6 L803 224.6 L804.6 226.4 L806 225 L807.8 227.6Z" fill="#d8d8d8"/>
<!-- list -->
<g fill="#d8d8d8"><rect x="835.3" y="220.8" width="2" height="2"/><rect x="835.3" y="225" width="2" height="2"/><rect x="835.3" y="229.3" width="2" height="2"/><rect x="839.5" y="221" width="8.7" height="1.6"/><rect x="839.5" y="225.2" width="8.7" height="1.6"/><rect x="839.5" y="229.5" width="8.7" height="1.6"/></g>
<!-- dots -->
<g fill="#e6e6e6"><circle cx="875" cy="226" r="2.1"/><circle cx="880.6" cy="226" r="2.1"/><circle cx="886.2" cy="226" r="2.1"/></g>
<!-- list header band -->
<rect x="706" y="243.3" width="194" height="18" fill="#2d2d2d"/>
<!-- layer row -->
<rect x="706" y="261.2" width="149" height="52.7" fill="#4f9cd8"/>
<rect x="742" y="261.2" width="1" height="52.7" fill="#78b4e2"/>
<rect x="796.5" y="261.2" width="1" height="52.7" fill="#78b4e2"/>
<rect x="748.3" y="261.2" width="42.7" height="52.7" fill="url(#chk3)"/>
<use href="#fig" transform="translate(748.3 261.2) scale(0.10364 0.10233) translate(-184 -79)"/>
<!-- eye -->
<path d="M712.2 287.7 C715.5 281.3 720 279.6 724.2 279.6 C728.4 279.6 732.9 281.3 736.2 287.7 C732.9 294.2 728.4 295.9 724.2 295.9 C720 295.9 715.5 294.2 712.2 287.7Z" fill="#fafafa"/>
<circle cx="724.3" cy="287.6" r="4.6" fill="none" stroke="#4b97d2" stroke-width="1.9"/>
<!-- gear -->
<g transform="translate(877.1 287.6)" fill="#fafafa">
 <circle r="7"/>
 <g><rect x="-1.8" y="-9.8" width="3.6" height="19.6" rx="0.8"/><rect x="-1.8" y="-9.8" width="3.6" height="19.6" rx="0.8" transform="rotate(45)"/><rect x="-1.8" y="-9.8" width="3.6" height="19.6" rx="0.8" transform="rotate(90)"/><rect x="-1.8" y="-9.8" width="3.6" height="19.6" rx="0.8" transform="rotate(135)"/></g>
 <circle r="3.1" fill="#4a4a4a"/>
</g>

<!-- bottom toolbar icons -->
<path d="M291 642.3 C290.5 636.5 287 634.3 282 634.5 L282 632 L276 637 L282 641.7 L282 638.7 C285.5 638.5 288.5 639.3 291 642.3Z" fill="#e8e8e8"/>
<path d="M311 642.3 C311.5 636.5 315 634.3 320 634.5 L320 632 L326 637 L320 641.7 L320 638.7 C316.5 638.5 313.5 639.3 311 642.3Z" fill="#777"/>
<g>
 <path d="M357.3 627.8 L349.8 634.6" stroke="#3896c4" stroke-width="3.3" stroke-linecap="round"/>
 <path d="M347.2 636 C349 636 349.6 637.5 349.4 638.6 C349.1 640 347.7 640.6 346.4 640.6 C345.4 640.6 344.5 640.3 344 640 C344.8 639.6 344.9 638.8 345 638.2 C345.2 636.9 346.2 636 347.2 636Z" fill="#3896c4"/>
 <path d="M359.3 633.3 C361.2 634.2 362.6 635.8 363.3 637.3" fill="none" stroke="#dcdcdc" stroke-width="1.3"/>
 <path d="M361.5 637.6 L364.4 639 L364.2 635.8Z" fill="#dcdcdc"/>
 <path d="M354.3 646.3 C352.3 645.6 350.9 644 350.3 642.3" fill="none" stroke="#dcdcdc" stroke-width="1.3"/>
 <path d="M352 642 L349.2 640.6 L349.5 643.8Z" fill="#dcdcdc"/>
 <path d="M361.4 640.6 L365.2 644.4 L360.8 648.8 L357 645Z" fill="#d4d4d4"/>
 <path d="M357 645 L358.6 643.4 L362.4 647.2 L360.8 648.8Z" fill="#242424" opacity="0.75"/>
</g>
<rect x="380" y="628" width="20" height="19.5" fill="url(#chk)"/>
<g>
 <path d="M420.3 643.5 L420.8 640.5 L427.5 633.8 L430.3 636.6 L423.6 643.3 Z" fill="none" stroke="#e6e6e6" stroke-width="1.5" stroke-linejoin="round"/>
 <path d="M427 632.3 L429.3 630 C430.8 628.5 433 630.7 431.5 632.2 L429.2 634.5" fill="#e6e6e6"/>
 <path d="M426.2 632.3 L431.8 637.9" stroke="#e6e6e6" stroke-width="2"/>
</g>
<g fill="#e0e0e0">
 <path d="M459.7 627.5 H463 V634 H466 L461.3 639.8 L456.6 634 H459.7Z"/>
 <rect x="451" y="642.8" width="20.4" height="5"/>
 <rect x="464.5" y="644.5" width="4.5" height="1.6" fill="#242424"/>
</g>
<g>
 <path d="M487 633.7 L494.6 637.8 L487 642Z" fill="#e6e6e6"/>
 <path d="M496.5 631.5 V645" stroke="#c8c8c8" stroke-width="1" stroke-dasharray="1.2 1"/>
 <path d="M507 633.9 L500 637.8 L507 641.8Z" fill="none" stroke="#e6e6e6" stroke-width="1.2"/>
</g>
<g fill="none" stroke="#e6e6e6" stroke-width="1.5">
 <path d="M532.5 629.6 A8.4 8.4 0 0 1 540.9 638"/>
 <path d="M540.9 638 A8.4 8.4 0 0 1 532.5 646.4 A8.4 8.4 0 0 1 524.1 638 A8.4 8.4 0 0 1 528 631" stroke-dasharray="1.6 1.4"/>
 <path d="M523 629.5 L542 647.4" stroke-width="1.6"/>
</g>
<path d="M533 627 L530 629.7 L533.5 632" fill="#e6e6e6"/>
<rect x="556" y="620" width="1" height="36" fill="#3a3a3a"/>
<rect x="569.2" y="630.8" width="14" height="14" rx="1.6" fill="#e8e8e8"/>
<path d="M573.5 642 C573.5 637.5 575.5 635.5 579 635.3 L579 633.5 L581.5 636.5 L579 639 L579 637.2 C576.5 637.5 574.8 639 573.5 642Z" fill="#222"/>
<rect x="596" y="620" width="1" height="36" fill="#3a3a3a"/>
<g fill="#c4c4c4"><circle cx="612.7" cy="632.00" r="0.95"/><circle cx="616.8" cy="632.00" r="0.95"/><circle cx="620.8" cy="632.00" r="0.95"/><circle cx="612.7" cy="635.90" r="0.95"/><circle cx="616.8" cy="635.90" r="0.95"/><circle cx="620.8" cy="635.90" r="0.95"/><circle cx="612.7" cy="639.75" r="0.95"/><circle cx="616.8" cy="639.75" r="0.95"/><circle cx="620.8" cy="639.75" r="0.95"/><circle cx="612.7" cy="643.80" r="0.95"/><circle cx="616.8" cy="643.80" r="0.95"/><circle cx="620.8" cy="643.80" r="0.95"/></g>
</svg>

<div class="t" style="left:707px;top:64px;width:194px;text-align:center;font-size:14px;font-weight:500;color:#f4f4f4;transform:scaleX(0.885)">레이어</div>
<div class="t" style="left:712px;top:96px;font-size:11px;transform:scaleX(0.84);transform-origin:0 0">불투명도</div>
<div class="t" style="left:850px;top:96px;width:43px;text-align:right;font-size:11px">100%</div>
<div class="t" style="left:712px;top:148px;width:89px;text-align:center;font-size:11px;transform:scaleX(0.83)">투명도 보호</div>
<div class="t" style="left:804px;top:148px;width:89px;text-align:center;font-size:11px;transform:scaleX(0.89)">보통</div>
<div class="t" style="left:730px;top:184px;width:64px;text-align:center;font-size:11px;transform:scaleX(0.9)">클리핑</div>
<div class="t" style="left:822px;top:184px;width:64px;text-align:center;font-size:11px;transform:scaleX(0.865)">잠금</div>
<div class="t" style="left:719px;top:245px;font-size:14px;font-weight:bold;color:#f4f4f4;transform:scaleX(0.853);transform-origin:0 0">레이어 목록</div>
<div class="t" style="left:800px;top:283px;font-size:10.5px;font-weight:bold;color:#f2f2f2">Layer21</div>
<div class="t" style="left:341px;top:662px;width:218px;text-align:center;font-size:9.3px">800*1000px 350dpi 127% 브러시: 62px 40%</div>
<div id="stxt" class="abs">브러시 툴은 다양한 브러시를 통해 캔버스를 그리는 툴 입니다.</div>
</body></html>
